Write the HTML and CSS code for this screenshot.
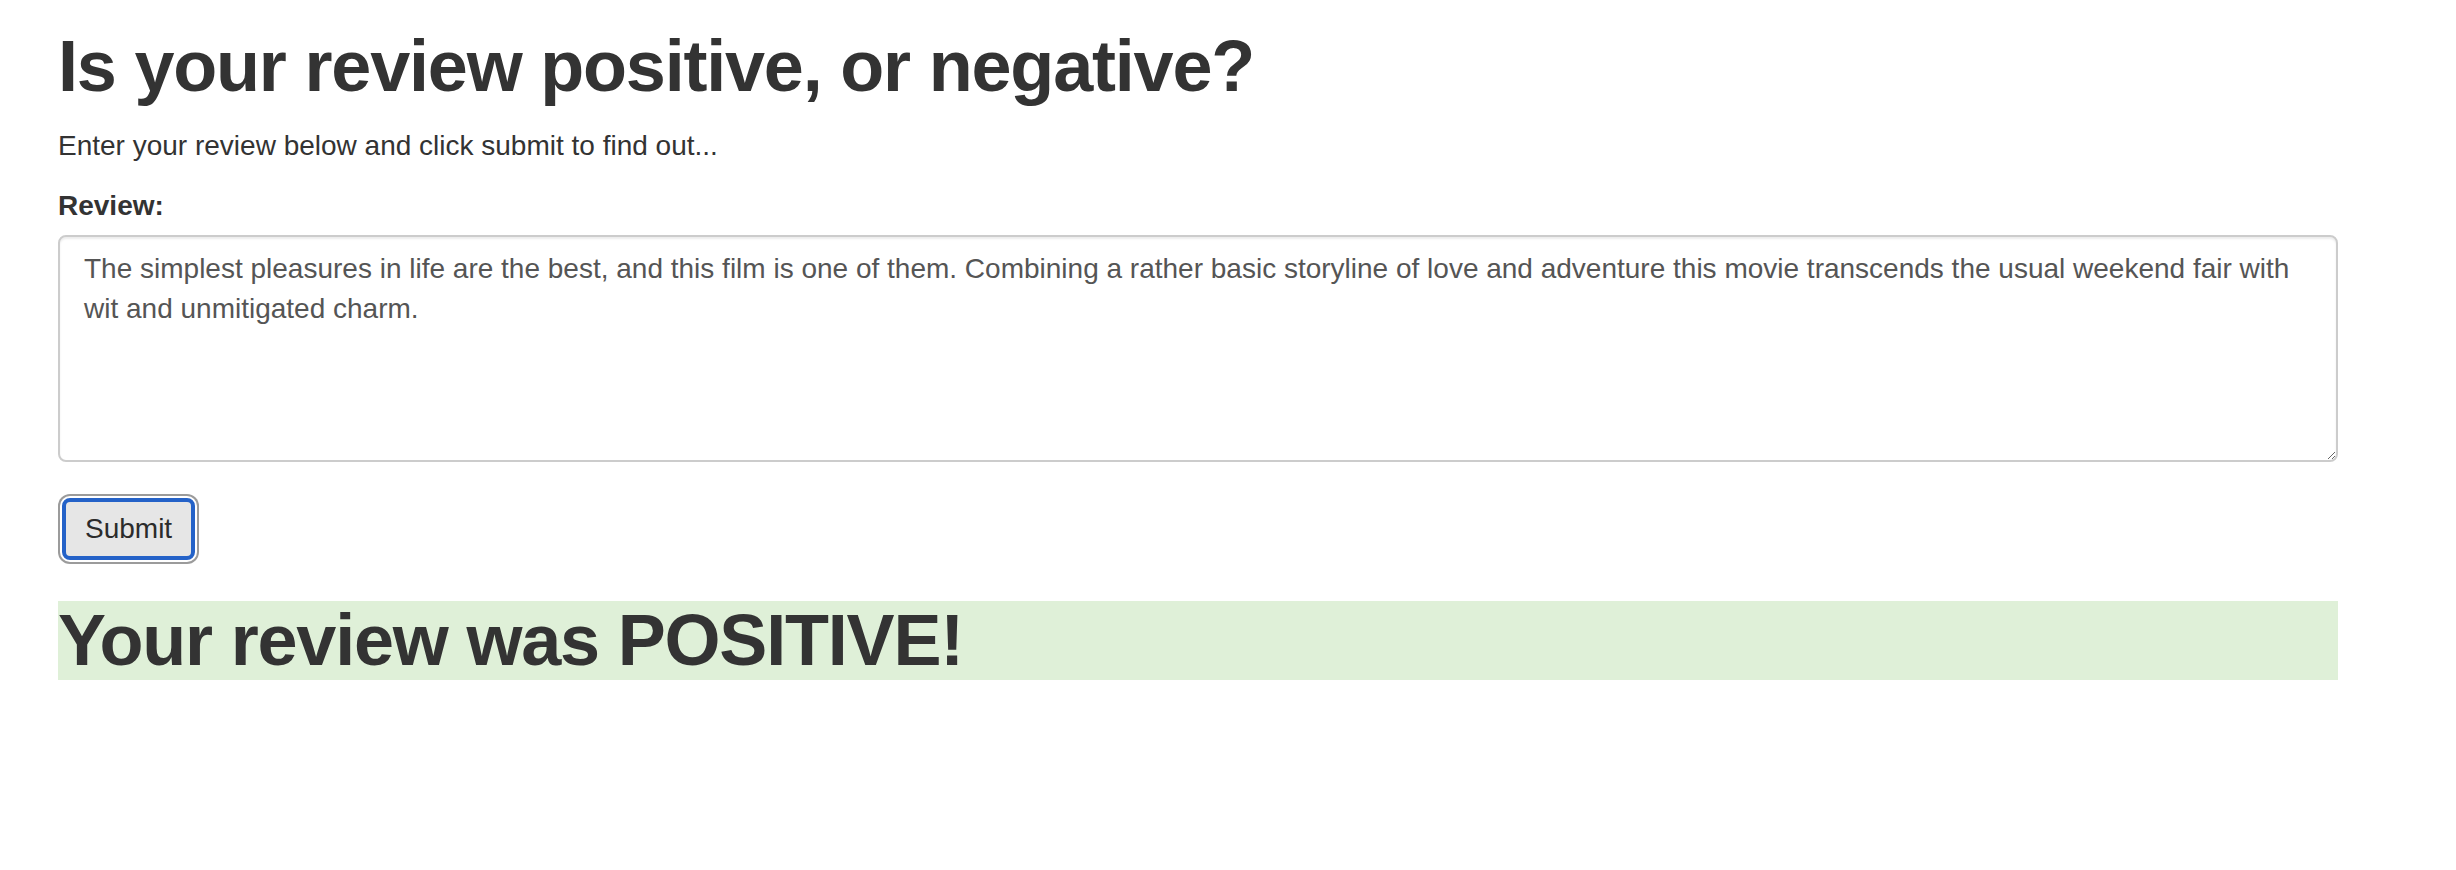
FILE: index.html
```html
<!DOCTYPE html>
<html lang="en">
<head>
<meta charset="utf-8">
<title>Is your review positive, or negative?</title>
<link rel="stylesheet" href="styles.css">
</head>
<body>
<div class="container">
  <h1 class="title">Is your review positive, or negative?</h1>
  <p class="intro">Enter your review below and click submit to find out...</p>
  <form class="review-form">
    <div class="form-group">
      <label class="field-label" for="review">Review:</label>
      <textarea id="review" class="form-control" rows="5">The simplest pleasures in life are the best, and this film is one of them. Combining a rather basic storyline of love and adventure this movie transcends the usual weekend fair with wit and unmitigated charm.</textarea>
    </div>
    <button type="button" class="submit-btn">Submit</button>
  </form>
  <div class="result">
    <h1 class="result-text">Your review was POSITIVE!</h1>
  </div>
</div>
</body>
</html>
```

FILE: styles.css
```css
html, body {
  margin: 0;
  padding: 0;
  background: #ffffff;
}

body {
  font-family: "Liberation Sans", Arial, Helvetica, sans-serif;
  font-size: 28px;
  line-height: 40px;
  color: #333333;
}

.container {
  width: 2280px;
  margin-left: 58px;
}

.title {
  font-size: 72px;
  font-weight: bold;
  letter-spacing: -1.2px;
  line-height: 79px;
  margin: 27px 0 20px;
  color: #333333;
}

.intro {
  margin: 0 0 20px;
}

.review-form {
  margin: 0;
}

.form-group {
  margin-bottom: 36px;
}

.field-label {
  display: block;
  font-weight: bold;
  margin-bottom: 9px;
}

.form-control {
  display: block;
  width: 100%;
  box-sizing: border-box;
  height: 227px;
  margin: 0;
  padding: 12px 24px;
  border: 2px solid #cccccc;
  border-radius: 8px;
  box-shadow: inset 0 2px 2px rgba(0, 0, 0, 0.075);
  font-family: "Liberation Sans", Arial, Helvetica, sans-serif;
  font-size: 28px;
  line-height: 40px;
  color: #555555;
  background: #ffffff;
  resize: both;
  overflow: auto;
}

.submit-btn {
  display: block;
  box-sizing: border-box;
  height: 62px;
  margin: 0 0 0 4px;
  padding: 0 19px;
  border: 4px solid #2462c8;
  border-radius: 8px;
  background: #e6e6e6;
  box-shadow: 0 0 0 2px #ffffff, 0 0 0 4px #9b9b9b;
  font-family: "Liberation Sans", Arial, Helvetica, sans-serif;
  font-size: 28px;
  line-height: 54px;
  color: #2b2b2b;
  outline: none;
}

.result {
  margin-top: 41px;
  background: #dff0d8;
}

.result-text {
  margin: 0;
  font-size: 72px;
  font-weight: bold;
  letter-spacing: -1.2px;
  line-height: 79px;
  color: #333333;
}
```
